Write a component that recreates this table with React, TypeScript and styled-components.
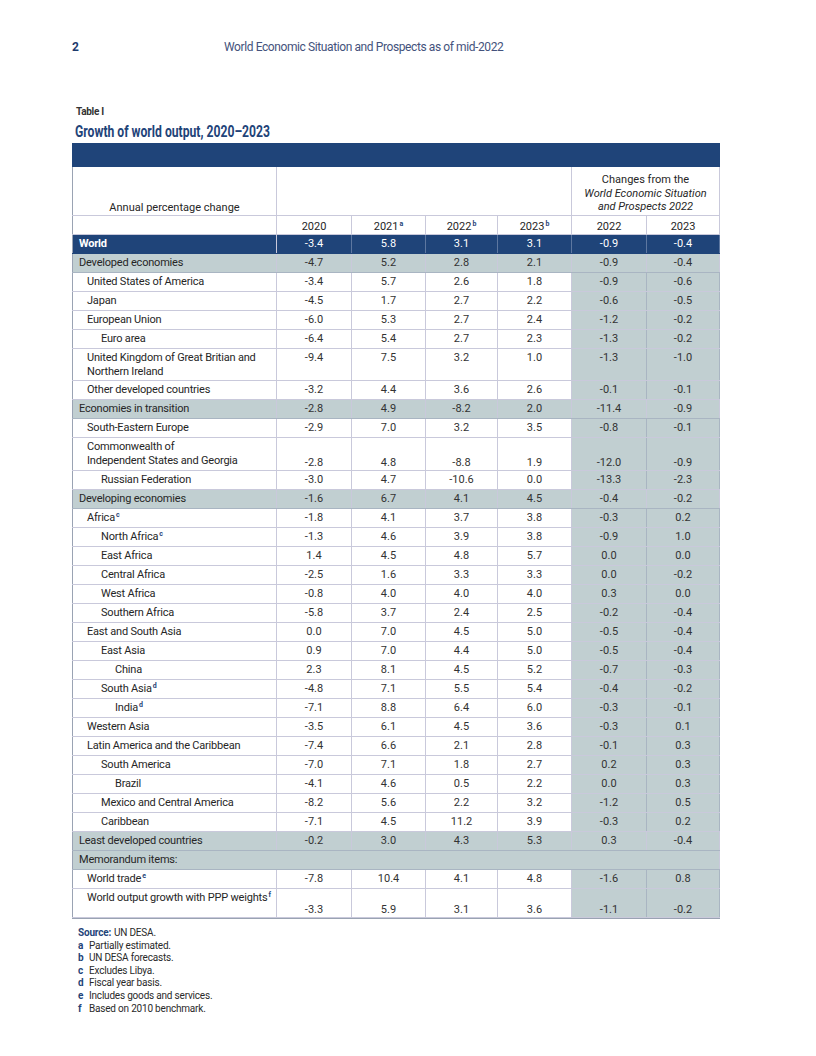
import React from "react";
import styled, { createGlobalStyle } from "styled-components";

const BLUE = "#1f4479";
const GRAY = "#c1cfd1";
const LINE = "#c9c9db";
const GLINE = "#a9b5c2";
const TEXT = "#262626";

const Global = createGlobalStyle`
  html, body { margin: 0; padding: 0; background: #fff; }
  body { font-family: Roboto, "Noto Sans", sans-serif; color: ${TEXT}; }
`;

const Page = styled.div`
  width: 816px;
  height: 1056px;
  box-sizing: border-box;
  padding: 40px 0 0 72px;
`;

const RunningHead = styled.header`
  display: flex;
  align-items: center;
  height: 14px;
  font-size: 12px;
  line-height: 14px;
`;

const PageNum = styled.span`
  font-weight: 700;
  color: #1d3a6c;
  width: 152px;
`;

const HeadTitle = styled.span`
  color: #44527c;
  letter-spacing: -0.4px;
`;

const TableLabel = styled.div`
  margin-top: 52px;
  font-size: 10px;
  line-height: 12px;
  font-weight: 700;
  color: #333;
  padding-left: 4px;
  letter-spacing: -0.3px;
`;

const TableTitle = styled.h1`
  margin: 4px 0 0 0;
  padding-left: 4px;
  font-size: 16px;
  line-height: 19px;
  font-weight: 700;
  color: ${BLUE};
  white-space: nowrap;
  transform: scaleX(0.76);
  transform-origin: left center;
`;

const Table = styled.div`
  width: 648px;
  margin-top: 2px;
  font-size: 11px;
  border-bottom: 1px solid #9aa3b3;
`;

const Band = styled.div`
  height: 24px;
  background: ${BLUE};
`;

const COLS = "205px 75px 74px 72px 74px 75px 73px";

type Kind = "world" | "group" | "item" | "memo" | "head";

const Row = styled.div<{ $h: number; $kind: Kind }>`
  display: grid;
  grid-template-columns: ${COLS};
  height: ${(p) => p.$h}px;
  box-sizing: border-box;
  border-bottom: 1px solid
    ${(p) =>
      p.$kind === "group" || p.$kind === "memo"
        ? GLINE
        : p.$kind === "world"
        ? BLUE
        : LINE};
  background: ${(p) =>
    p.$kind === "world" ? BLUE : p.$kind === "group" || p.$kind === "memo" ? GRAY : "#fff"};
  color: ${(p) => (p.$kind === "world" ? "#fff" : TEXT)};
`;

const LabelCell = styled.div<{ $indent: number; $bold?: boolean; $valign: string; $span?: boolean }>`
  grid-column: ${(p) => (p.$span ? "1 / -1" : "auto")};
  display: flex;
  flex-direction: column;
  justify-content: ${(p) => p.$valign};
  box-sizing: border-box;
  padding: ${(p) => (p.$valign === "flex-start" ? "2px" : "0")} 4px 0 ${(p) => 6 + p.$indent}px;
  line-height: 14px;
  font-weight: ${(p) => (p.$bold ? 700 : 400)};
  border-left: 1px solid #9aa3b3;
  border-right: 1px solid ${LINE};
  letter-spacing: -0.2px;
  white-space: nowrap;
`;

const NumCell = styled.div<{ $shade: boolean; $valign: string; $light: boolean }>`
  display: flex;
  justify-content: center;
  align-items: ${(p) => p.$valign};
  box-sizing: border-box;
  line-height: 14px;
  padding-top: ${(p) => (p.$valign === "flex-start" ? "2px" : "0")};
  background: ${(p) => (p.$shade ? GRAY : "transparent")};
  border-right: 1px solid ${(p) => (p.$light ? "#5d77a0" : p.$shade ? GLINE : LINE)};
  color: ${(p) => (p.$light ? "#fff" : "#333")};
`;

const HeadCell = styled.div<{ $col: string; $align?: string }>`
  grid-column: ${(p) => p.$col};
  display: flex;
  flex-direction: column;
  justify-content: ${(p) => p.$align || "flex-end"};
  align-items: center;
  text-align: center;
  box-sizing: border-box;
  border-right: 1px solid ${LINE};
  line-height: 13.5px;
  padding-bottom: 1px;
  &:first-child {
    border-left: 1px solid #9aa3b3;
  }
`;

const HeadFirst = styled.span`
  padding-top: 6px;
`;

const Italic = styled.span`
  font-style: italic;
`;

const Sup = styled.sup`
  font-size: 7px;
  line-height: 0;
  font-weight: 700;
  color: ${BLUE};
  vertical-align: 4px;
  margin-left: 1px;
`;

const Notes = styled.div`
  margin-top: 8px;
  padding-left: 6px;
  font-size: 10px;
  line-height: 12.6px;
  color: #2a2a2a;
  letter-spacing: -0.2px;
`;

const NoteLine = styled.div`
  display: flex;
`;

const NoteKey = styled.span`
  font-weight: 700;
  color: ${BLUE};
  width: 11px;
`;

const SourceKey = styled.span`
  font-weight: 700;
  color: ${BLUE};
  margin-right: 3px;
`;

type RowData = {
  label: React.ReactNode;
  kind: Kind;
  indent?: number;
  vals?: string[];
  h?: number;
  labelAlign?: string;
  numAlign?: string;
};

const rows: RowData[] = [
  { label: "World", kind: "world", vals: ["-3.4", "5.8", "3.1", "3.1", "-0.9", "-0.4"] },
  { label: "Developed economies", kind: "group", vals: ["-4.7", "5.2", "2.8", "2.1", "-0.9", "-0.4"] },
  { label: "United States of America", kind: "item", indent: 8, vals: ["-3.4", "5.7", "2.6", "1.8", "-0.9", "-0.6"] },
  { label: "Japan", kind: "item", indent: 8, vals: ["-4.5", "1.7", "2.7", "2.2", "-0.6", "-0.5"] },
  { label: "European Union", kind: "item", indent: 8, vals: ["-6.0", "5.3", "2.7", "2.4", "-1.2", "-0.2"] },
  { label: "Euro area", kind: "item", indent: 22, vals: ["-6.4", "5.4", "2.7", "2.3", "-1.3", "-0.2"] },
  {
    label: (
      <>
        <span>United Kingdom of Great Britian and</span>
        <span>Northern Ireland</span>
      </>
    ),
    kind: "item",
    indent: 8,
    h: 32,
    labelAlign: "flex-start",
    numAlign: "flex-start",
    vals: ["-9.4", "7.5", "3.2", "1.0", "-1.3", "-1.0"],
  },
  { label: "Other developed countries", kind: "item", indent: 8, vals: ["-3.2", "4.4", "3.6", "2.6", "-0.1", "-0.1"] },
  { label: "Economies in transition", kind: "group", vals: ["-2.8", "4.9", "-8.2", "2.0", "-11.4", "-0.9"] },
  { label: "South-Eastern Europe", kind: "item", indent: 8, vals: ["-2.9", "7.0", "3.2", "3.5", "-0.8", "-0.1"] },
  {
    label: (
      <>
        <span>Commonwealth of</span>
        <span>Independent States and Georgia</span>
      </>
    ),
    kind: "item",
    indent: 8,
    h: 33,
    labelAlign: "flex-start",
    numAlign: "flex-end",
    vals: ["-2.8", "4.8", "-8.8", "1.9", "-12.0", "-0.9"],
  },
  { label: "Russian Federation", kind: "item", indent: 22, vals: ["-3.0", "4.7", "-10.6", "0.0", "-13.3", "-2.3"] },
  { label: "Developing economies", kind: "group", vals: ["-1.6", "6.7", "4.1", "4.5", "-0.4", "-0.2"] },
  { label: <span>Africa<Sup>c</Sup></span>, kind: "item", indent: 8, vals: ["-1.8", "4.1", "3.7", "3.8", "-0.3", "0.2"] },
  { label: <span>North Africa<Sup>c</Sup></span>, kind: "item", indent: 22, vals: ["-1.3", "4.6", "3.9", "3.8", "-0.9", "1.0"] },
  { label: "East Africa", kind: "item", indent: 22, vals: ["1.4", "4.5", "4.8", "5.7", "0.0", "0.0"] },
  { label: "Central Africa", kind: "item", indent: 22, vals: ["-2.5", "1.6", "3.3", "3.3", "0.0", "-0.2"] },
  { label: "West Africa", kind: "item", indent: 22, vals: ["-0.8", "4.0", "4.0", "4.0", "0.3", "0.0"] },
  { label: "Southern Africa", kind: "item", indent: 22, vals: ["-5.8", "3.7", "2.4", "2.5", "-0.2", "-0.4"] },
  { label: "East and South Asia", kind: "item", indent: 8, vals: ["0.0", "7.0", "4.5", "5.0", "-0.5", "-0.4"] },
  { label: "East Asia", kind: "item", indent: 22, vals: ["0.9", "7.0", "4.4", "5.0", "-0.5", "-0.4"] },
  { label: "China", kind: "item", indent: 36, vals: ["2.3", "8.1", "4.5", "5.2", "-0.7", "-0.3"] },
  { label: <span>South Asia<Sup>d</Sup></span>, kind: "item", indent: 22, vals: ["-4.8", "7.1", "5.5", "5.4", "-0.4", "-0.2"] },
  { label: <span>India<Sup>d</Sup></span>, kind: "item", indent: 36, vals: ["-7.1", "8.8", "6.4", "6.0", "-0.3", "-0.1"] },
  { label: "Western Asia", kind: "item", indent: 8, vals: ["-3.5", "6.1", "4.5", "3.6", "-0.3", "0.1"] },
  { label: "Latin America and the Caribbean", kind: "item", indent: 8, vals: ["-7.4", "6.6", "2.1", "2.8", "-0.1", "0.3"] },
  { label: "South America", kind: "item", indent: 22, vals: ["-7.0", "7.1", "1.8", "2.7", "0.2", "0.3"] },
  { label: "Brazil", kind: "item", indent: 36, vals: ["-4.1", "4.6", "0.5", "2.2", "0.0", "0.3"] },
  { label: "Mexico and Central America", kind: "item", indent: 22, vals: ["-8.2", "5.6", "2.2", "3.2", "-1.2", "0.5"] },
  { label: "Caribbean", kind: "item", indent: 22, vals: ["-7.1", "4.5", "11.2", "3.9", "-0.3", "0.2"] },
  { label: "Least developed countries", kind: "group", vals: ["-0.2", "3.0", "4.3", "5.3", "0.3", "-0.4"] },
  { label: "Memorandum items:", kind: "memo" },
  { label: <span>World trade<Sup>e</Sup></span>, kind: "item", indent: 8, vals: ["-7.8", "10.4", "4.1", "4.8", "-1.6", "0.8"] },
  {
    label: <span>World output growth with PPP weights<Sup>f</Sup></span>,
    kind: "item",
    indent: 8,
    h: 29,
    labelAlign: "flex-start",
    numAlign: "flex-end",
    vals: ["-3.3", "5.9", "3.1", "3.6", "-1.1", "-0.2"],
  },
];

const notes: [string, string][] = [
  ["a", "Partially estimated."],
  ["b", "UN DESA forecasts."],
  ["c", "Excludes Libya."],
  ["d", "Fiscal year basis."],
  ["e", "Includes goods and services."],
  ["f", "Based on 2010 benchmark."],
];

export default function App() {
  return (
    <Page>
      <Global />
      <RunningHead>
        <PageNum>2</PageNum>
        <HeadTitle>World Economic Situation and Prospects as of mid-2022</HeadTitle>
      </RunningHead>
      <TableLabel>Table I</TableLabel>
      <TableTitle>Growth of world output, 2020–2023</TableTitle>
      <Table>
        <Band />
        <Row $h={49} $kind="head">
          <HeadCell $col="1">Annual percentage change</HeadCell>
          <HeadCell $col="2 / 6" />
          <HeadCell $col="6 / 8" $align="flex-start">
            <HeadFirst>Changes from the</HeadFirst>
            <Italic>World Economic Situation</Italic>
            <Italic>and Prospects 2022</Italic>
          </HeadCell>
        </Row>
        <Row $h={19} $kind="head">
          <HeadCell $col="1" />
          <HeadCell $col="2">2020</HeadCell>
          <HeadCell $col="3">
            <span>2021<Sup>a</Sup></span>
          </HeadCell>
          <HeadCell $col="4">
            <span>2022<Sup>b</Sup></span>
          </HeadCell>
          <HeadCell $col="5">
            <span>2023<Sup>b</Sup></span>
          </HeadCell>
          <HeadCell $col="6">2022</HeadCell>
          <HeadCell $col="7">2023</HeadCell>
        </Row>
        {rows.map((r, i) => (
          <Row key={i} $h={r.h || 19} $kind={r.kind}>
            <LabelCell
              $indent={r.indent || 0}
              $bold={r.kind === "world"}
              $valign={r.labelAlign || "center"}
              $span={r.kind === "memo"}
            >
              {r.label}
            </LabelCell>
            {r.vals &&
              r.vals.map((v, j) => (
                <NumCell
                  key={j}
                  $shade={r.kind === "item" && j >= 4}
                  $light={r.kind === "world"}
                  $valign={r.numAlign || "center"}
                >
                  {v}
                </NumCell>
              ))}
          </Row>
        ))}
      </Table>
      <Notes>
        <NoteLine>
          <SourceKey>Source:</SourceKey>UN DESA.
        </NoteLine>
        {notes.map(([k, t]) => (
          <NoteLine key={k}>
            <NoteKey>{k}</NoteKey>
            {t}
          </NoteLine>
        ))}
      </Notes>
    </Page>
  );
}
